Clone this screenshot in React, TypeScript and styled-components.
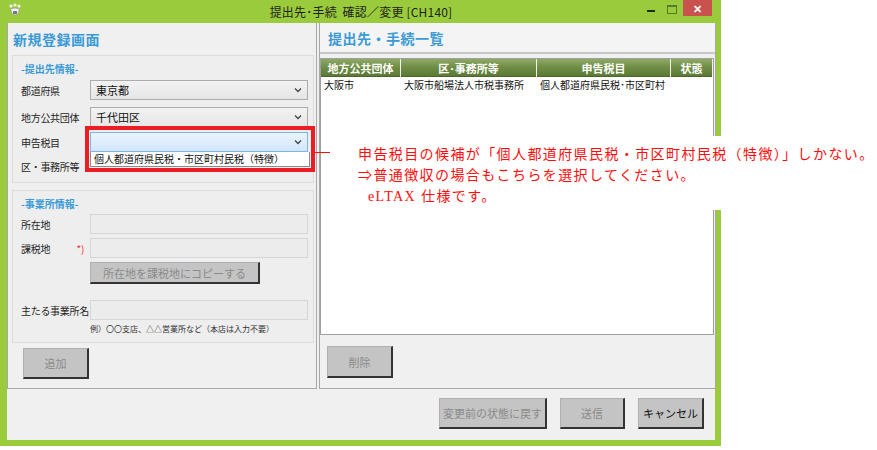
import React from 'react';
import styled, { createGlobalStyle } from 'styled-components';

const GlobalStyle = createGlobalStyle`
    html, body {
        margin: 0;
        padding: 0;
        background: #ffffff;
    }
    body {
        font-family: "Noto Sans CJK JP", "Noto Sans", sans-serif;
    }
`;

const Stage = styled.div`
    position: relative;
    width: 877px;
    height: 450px;
    overflow: hidden;
    background: #ffffff;
`;

const Window = styled.div`
    width: 721px;
    height: 446px;
    box-sizing: border-box;
    background: #9acb3c;
    padding: 0 6px 6px 7px;
    display: flex;
    flex-direction: column;
`;

const TitleBar = styled.div`
    position: relative;
    height: 23px;
    display: flex;
    align-items: center;
    justify-content: center;
    font-size: 12px;
    color: #1e1e1e;
    letter-spacing: 0.2px;
`;

const AppIcon = styled.svg`
    position: absolute;
    left: 1px;
    top: 3px;
`;

const Controls = styled.div`
    position: absolute;
    right: 3px;
    top: 0;
    display: flex;
    align-items: flex-start;
`;

const Minimize = styled.div`
    width: 8px;
    height: 2px;
    background: #1f2a10;
    margin: 10px 12px 0 0;
`;

const Maximize = styled.div`
    width: 8px;
    height: 6px;
    border: 1px solid #5a7a2a;
    border-top-width: 2px;
    margin: 5px 6px 0 0;
`;

const Close = styled.div`
    width: 29px;
    height: 16px;
    background: #c9524f;
    color: #fff;
    font-size: 11px;
    font-weight: bold;
    display: flex;
    align-items: center;
    justify-content: center;
    line-height: 1;
`;

const Client = styled.div`
    flex: 1;
    background: #f0f0f0;
    display: flex;
    flex-direction: column;
`;

const Panels = styled.div`
    height: 366px;
    display: flex;
    gap: 2px;
`;

const Panel = styled.div<{ $width?: number }>`
    ${({ $width }) => ($width ? `width: ${$width}px;` : 'flex: 1;')}
    box-sizing: border-box;
    border: 1px solid #a8a8a8;
    border-top: none;
    background: #f0f0f0;
    display: flex;
    flex-direction: column;
`;

const LeftInner = styled.div`
    padding: 0 2px 0 4px;
    display: flex;
    flex-direction: column;
`;

const PanelTitle = styled.div`
    height: 32px;
    display: flex;
    align-items: center;
    padding-left: 5px;
    font-size: 14px;
    font-weight: bold;
    color: #3a9ad6;
    letter-spacing: 0.5px;
`;

const RightTitle = styled(PanelTitle)`
    height: 29px;
    padding-left: 8px;
    border-bottom: 2px solid #c8c8c8;
    background: #f4f4f4;
    margin-bottom: 4px;
`;

const Group = styled.div<{ $height: number }>`
    box-sizing: border-box;
    height: ${({ $height }) => $height}px;
    border: 1px solid #dcdcdc;
    background: #eeeeee;
    padding: 4px 5px 0 8px;
    display: flex;
    flex-direction: column;
`;

const GroupLabel = styled.div`
    font-size: 10px;
    font-weight: bold;
    color: #3a9ad6;
    height: 17px;
    line-height: 17px;
`;

const Row = styled.div<{ $mt?: number }>`
    position: relative;
    display: flex;
    align-items: center;
    height: 20px;
    margin-top: ${({ $mt }) => $mt ?? 5}px;
`;

const Label = styled.div`
    width: 69px;
    flex-shrink: 0;
    font-size: 10px;
    letter-spacing: -0.3px;
    color: #1e1e1e;
    display: flex;
    align-items: center;
    white-space: nowrap;
`;

const Required = styled.span`
    color: #e33;
    font-size: 10px;
    margin-left: auto;
    padding-right: 6px;
`;

const Select = styled.div<{ $active?: boolean }>`
    box-sizing: border-box;
    width: 220px;
    height: 20px;
    border: 1px solid ${({ $active }) => ($active ? '#7eb4ea' : '#acacac')};
    background: ${({ $active }) =>
        $active ? 'linear-gradient(#eaf4fd, #d2e7fb)' : 'linear-gradient(#f2f2f2, #e6e6e6)'};
    display: flex;
    align-items: center;
    padding-left: 5px;
    font-size: 11px;
    color: #111;
`;

const Chevron = styled.svg`
    margin-left: auto;
    margin-right: 5px;
`;

const Input = styled.div`
    box-sizing: border-box;
    width: 220px;
    height: 20px;
    border: 1px solid #d6d6d6;
    background: #ececec;
`;

const DropList = styled.div`
    position: absolute;
    left: 69px;
    top: 20px;
    box-sizing: border-box;
    width: 220px;
    height: 15px;
    background: #ffffff;
    border: 1px solid #8a8a8a;
    border-top: none;
    font-size: 10px;
    line-height: 14px;
    padding-left: 3px;
    color: #111;
    z-index: 2;
`;

const Button = styled.div<{ $w: number; $h: number; $enabled?: boolean }>`
    box-sizing: border-box;
    width: ${({ $w }) => $w}px;
    height: ${({ $h }) => $h}px;
    background: #c4c4c4;
    border: 1px solid #b0b0b0;
    border-right: 2px solid #333;
    border-bottom: 2px solid #333;
    display: flex;
    align-items: center;
    justify-content: center;
    font-size: 11px;
    color: ${({ $enabled }) => ($enabled ? '#111' : '#8a8a8a')};
`;

const ButtonRow = styled.div<{ $pl: number; $pt: number }>`
    padding: ${({ $pt }) => $pt}px 0 0 ${({ $pl }) => $pl}px;
`;

const Hint = styled.div`
    font-size: 8px;
    color: #333;
    margin: 3px 0 0 69px;
`;

const Table = styled.div`
    box-sizing: border-box;
    height: 277px;
    margin: 0 1px 0 0;
    border: 1px solid #a0a0a0;
    background: #ffffff;
`;

const HeadRow = styled.div`
    display: flex;
    height: 18px;
    background: #f0f0f0;
`;

const Th = styled.div<{ $w: number }>`
    width: ${({ $w }) => $w}px;
    box-sizing: border-box;
    margin-right: 1px;
    background: linear-gradient(#8fa966, #6b8a42 55%, #5c7a36);
    color: #ffffff;
    font-size: 11px;
    font-weight: bold;
    display: flex;
    align-items: center;
    justify-content: center;
    border-bottom: 1px solid #4b642c;
`;

const BodyRow = styled.div`
    display: flex;
    height: 15px;
    align-items: center;
`;

const Td = styled.div<{ $w: number }>`
    width: ${({ $w }) => $w}px;
    box-sizing: border-box;
    margin-right: 1px;
    padding-left: 3px;
    font-size: 10px;
    color: #111;
    white-space: nowrap;
    overflow: hidden;
`;

const Footer = styled.div`
    flex: 1;
    display: flex;
    justify-content: flex-end;
    align-items: flex-start;
    gap: 13px;
    padding: 9px 11px 0 0;
`;

const Annotation = styled.div`
    position: absolute;
    left: 330px;
    top: 136px;
    width: 547px;
    height: 74px;
    box-sizing: border-box;
    padding-top: 8px;
    background: #ffffff;
`;

const Note = styled.div<{ $indent?: number }>`
    font-family: "Liberation Serif", "Noto Sans CJK JP", serif;
    font-size: 14px;
    color: #ff0d0d;
    height: 21px;
    line-height: 21px;
    padding-left: ${({ $indent }) => $indent ?? 28}px;
    white-space: nowrap;
    letter-spacing: 1.4px;
`;

const Leader = styled.div`
    position: absolute;
    left: 314px;
    top: 152px;
    width: 38px;
    height: 1px;
    background: #ff0d0d;
`;

const RedBox = styled.div`
    position: absolute;
    left: 85px;
    top: 126px;
    width: 230px;
    height: 46px;
    box-sizing: border-box;
    border: 4px solid #ec1c24;
    z-index: 3;
`;

const ChevronIcon = () => (
    <Chevron width="8" height="6" viewBox="0 0 8 6">
        <path d="M1 1.5 L4 4.5 L7 1.5" fill="none" stroke="#444" strokeWidth="1.3" />
    </Chevron>
);

const cols = [79, 135, 133, 41];

const App: React.FC = () => {
    return (
        <Stage>
            <GlobalStyle />
            <Window>
                <TitleBar>
                    <AppIcon width="14" height="14" viewBox="0 0 14 14">
                        <circle cx="3" cy="3" r="1.6" fill="#f4f4f4" />
                        <circle cx="7" cy="2" r="1.6" fill="#f4f4f4" />
                        <circle cx="11" cy="3" r="1.6" fill="#f4f4f4" />
                        <path d="M2.5 6 Q7 4 11.5 6 L10 11 Q7 13 4 11 Z" fill="#f4f4f4" stroke="#8a8a8a" strokeWidth="0.6" />
                        <rect x="5" y="8" width="4" height="3" fill="#7a7a7a" />
                    </AppIcon>
                    <span>提出先･手続&nbsp;&nbsp;確認／変更 [CH140]</span>
                    <Controls>
                        <Minimize />
                        <Maximize />
                        <Close>✕</Close>
                    </Controls>
                </TitleBar>
                <Client>
                    <Panels>
                        <Panel $width={310}>
                            <PanelTitle>新規登録画面</PanelTitle>
                            <LeftInner>
                                <Group $height={128}>
                                    <GroupLabel>-提出先情報-</GroupLabel>
                                    <Row $mt={3}>
                                        <Label>都道府県</Label>
                                        <Select>東京都<ChevronIcon /></Select>
                                    </Row>
                                    <Row $mt={7}>
                                        <Label>地方公共団体</Label>
                                        <Select>千代田区<ChevronIcon /></Select>
                                    </Row>
                                    <Row $mt={5}>
                                        <Label>申告税目</Label>
                                        <Select $active><ChevronIcon /></Select>
                                        <DropList>個人都道府県民税・市区町村民税（特徴）</DropList>
                                    </Row>
                                    <Row $mt={4}>
                                        <Label>区・事務所等</Label>
                                    </Row>
                                </Group>
                                <div style={{ height: 7 }} />
                                <Group $height={153}>
                                    <GroupLabel>-事業所情報-</GroupLabel>
                                    <Row $mt={2}>
                                        <Label>所在地</Label>
                                        <Input />
                                    </Row>
                                    <Row $mt={4}>
                                        <Label>課税地<Required>*)</Required></Label>
                                        <Input />
                                    </Row>
                                    <ButtonRow $pl={69} $pt={4}>
                                        <Button $w={170} $h={22}>所在地を課税地にコピーする</Button>
                                    </ButtonRow>
                                    <Row $mt={16}>
                                        <Label>主たる事業所名</Label>
                                        <Input />
                                    </Row>
                                    <Hint>例）〇〇支店、△△営業所など（本店は入力不要）</Hint>
                                </Group>
                                <ButtonRow $pl={11} $pt={5}>
                                    <Button $w={66} $h={31}>追加</Button>
                                </ButtonRow>
                            </LeftInner>
                        </Panel>
                        <Panel>
                            <RightTitle>提出先・手続一覧</RightTitle>
                            <Table>
                                <HeadRow>
                                    <Th $w={cols[0]}>地方公共団体</Th>
                                    <Th $w={cols[1]}>区･事務所等</Th>
                                    <Th $w={cols[2]}>申告税目</Th>
                                    <Th $w={cols[3]}>状態</Th>
                                </HeadRow>
                                <BodyRow>
                                    <Td $w={cols[0]}>大阪市</Td>
                                    <Td $w={cols[1]}>大阪市船場法人市税事務所</Td>
                                    <Td $w={cols[2]}>個人都道府県民税･市区町村</Td>
                                    <Td $w={cols[3]}></Td>
                                </BodyRow>
                            </Table>
                            <ButtonRow $pl={7} $pt={11}>
                                <Button $w={66} $h={32}>削除</Button>
                            </ButtonRow>
                        </Panel>
                    </Panels>
                    <Footer>
                        <Button $w={108} $h={31}>変更前の状態に戻す</Button>
                        <Button $w={65} $h={31}>送信</Button>
                        <Button $w={66} $h={31} $enabled>キャンセル</Button>
                    </Footer>
                </Client>
            </Window>
            <RedBox />
            <Leader />
            <Annotation>
                <Note>申告税目の候補が「個人都道府県民税・市区町村民税（特徴）」しかない。</Note>
                <Note>⇒普通徴収の場合もこちらを選択してください。</Note>
                <Note $indent={38}>eLTAX 仕様です。</Note>
            </Annotation>
        </Stage>
    );
};

export default App;
